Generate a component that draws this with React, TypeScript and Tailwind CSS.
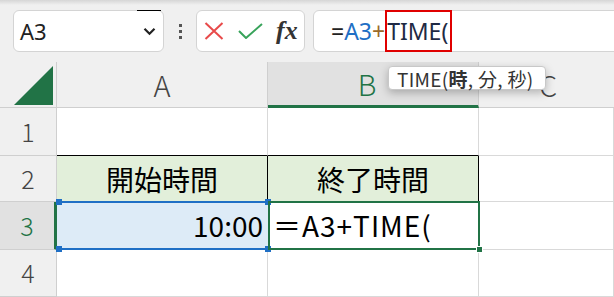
import React from "react";

const GRID = "border-r border-b border-[#d9d9d9]";

function Handle({ className }: { className: string }) {
  return <span className={"absolute h-[6px] w-[6px] bg-[#1f6fc5] " + className} />;
}

export default function App() {
  return (
    <div className="relative h-[297px] w-[614px] overflow-hidden bg-white font-['Noto_Sans','Liberation_Sans',sans-serif]">
      {/* Toolbar */}
      <div className="relative flex h-[62px] items-start bg-[#f0f0f0] pl-[13px] pt-[10px]">
        <div className="absolute inset-x-0 top-0 h-[5px] bg-gradient-to-b from-[#d6d6d6] to-[#f0f0f0]" />

        {/* Name box */}
        <div className="relative flex h-[42px] w-[151px] items-center rounded-[6px] border border-[#d4d4d4] bg-white pl-[6px] pr-[6px]">
          <span className="absolute left-[123px] top-[-1px] h-[1px] w-[24px] bg-black" />
          <span className="flex-1 text-[22px] leading-none text-[#222]">A3</span>
          <svg width="13" height="9" viewBox="0 0 13 9" className="mr-[1px]">
            <path d="M1.5 1.8 L6.5 6.8 L11.5 1.8" fill="none" stroke="#222" strokeWidth="2.2" />
          </svg>
        </div>

        {/* Dots */}
        <div className="flex h-[42px] w-[32px] flex-col items-center justify-center gap-[3px]">
          <span className="h-[3px] w-[3px] bg-[#555]" />
          <span className="h-[3px] w-[3px] bg-[#555]" />
          <span className="h-[3px] w-[3px] bg-[#555]" />
        </div>

        {/* Cancel / Enter / fx */}
        <div className="flex h-[42px] w-[109px] items-center rounded-[6px] border border-[#d4d4d4] bg-white pl-[7px]">
          <svg width="20" height="18" viewBox="0 0 20 18">
            <path d="M1.5 1 L18.5 17 M18.5 1 L1.5 17" stroke="#e84a4a" strokeWidth="2" fill="none" />
          </svg>
          <svg width="25" height="16" viewBox="0 0 25 16" className="ml-[14px]">
            <path d="M1 8 L8 15 L24 1" stroke="#38a35a" strokeWidth="2" fill="none" />
          </svg>
          <span className="ml-[13px] font-['Liberation_Serif',serif] text-[26px] font-bold italic leading-none text-[#333]">
            fx
          </span>
        </div>

        {/* Formula bar */}
        <div className="-mr-[20px] ml-[8px] flex h-[42px] flex-1 items-stretch rounded-[6px] border border-[#d4d4d4] bg-white pl-[17px] text-[23px] leading-none">
          <span className="flex items-center text-[#222]">=</span>
          <span className="flex items-center text-[#1f6fc5]">A3</span>
          <span className="flex items-center text-[#9a6a2a]">+</span>
          <span className="-my-[1px] flex items-center border-2 border-[#e00000] pr-[2px] text-[#1f2a44]">TIME(</span>
        </div>
      </div>

      {/* Sheet */}
      <div className="grid grid-cols-[57px_211px_211px_1fr] grid-rows-[46px_48px_46px_48px_47px] font-['Noto_Sans_CJK_JP','Noto_Sans',sans-serif]">
        {/* Header row */}
        <div className="relative border-r border-b border-[#cfcfcf] bg-[#f0f0f0]">
          <svg width="40" height="40" viewBox="0 0 40 40" className="absolute left-[14px] top-[4px]">
            <polygon points="39,0 39,39 0,39" fill="#217346" />
          </svg>
        </div>
        <div className="flex items-center justify-center border-r border-b border-[#cfcfcf] bg-[#f0f0f0] text-[29px] font-light text-[#444]">
          A
        </div>
        <div className="flex items-center justify-center border-r border-[#cfcfcf] border-b-[3px] border-b-[#217346] bg-[#e1e1e1] text-[29px] font-light text-[#217346]">
          <span className="-ml-[12px]">B</span>
        </div>
        <div className="flex items-center border-b border-[#cfcfcf] bg-[#f0f0f0] pl-[60px] text-[29px] font-light text-[#444]">
          C
        </div>

        {/* Row 1 */}
        <div className="flex items-center justify-center border-r border-b border-[#cfcfcf] bg-[#f0f0f0] text-[25px] font-light text-[#444]">1</div>
        <div className="border-r border-b border-r-[#d9d9d9] border-b-black" />
        <div className="border-r border-b border-r-[#d9d9d9] border-b-black" />
        <div className={GRID} />

        {/* Row 2 */}
        <div className="flex items-center justify-center border-r border-b border-[#cfcfcf] bg-[#f0f0f0] text-[25px] font-light text-[#444]">2</div>
        <div className="flex items-center justify-center border-r border-r-black bg-[#e2efda] text-[28px] text-black">開始時間</div>
        <div className="flex items-center justify-center border-r border-r-black bg-[#e2efda] text-[28px] text-black">終了時間</div>
        <div className={GRID} />

        {/* Row 3 */}
        <div className="flex items-center justify-center border-r-[3px] border-r-[#217346] border-b border-b-[#cfcfcf] bg-[#e1e1e1] text-[25px] font-light text-[#217346]">3</div>
        <div className="relative flex items-center justify-end bg-[#ddebf7] pr-[5px] text-[28px] text-black">
          <div className="absolute inset-x-0 -top-[1px] bottom-0 border-y-2 border-[#1f6fc5]" />
          <Handle className="-left-[1px] -top-[3px]" />
          <Handle className="-right-[3px] -top-[3px]" />
          <Handle className="-left-[1px] -bottom-[2px]" />
          <Handle className="-right-[3px] -bottom-[2px]" />
          <span className="relative -mt-[3px]">10:00</span>
        </div>
        <div className="relative flex items-center pl-[5px] text-[28px] tracking-[1px] text-black">
          <div className="absolute -top-[1px] -right-[1px] bottom-0 left-0 border-[2px] border-[#217346]" />
          <span className="absolute -bottom-[3px] -right-[4px] h-[7px] w-[7px] border border-white bg-[#217346]" />
          <span className="relative -mt-[3px]">＝A3+TIME(</span>
        </div>
        <div className={GRID} />

        {/* Row 4 */}
        <div className="flex items-center justify-center border-r border-b border-[#cfcfcf] bg-[#f0f0f0] text-[25px] font-light text-[#444]">4</div>
        <div className={GRID} />
        <div className={GRID} />
        <div className={GRID} />
      </div>

      {/* Function tooltip */}
      <div className="absolute left-[388px] top-[66px] flex h-[24px] w-[158px] items-center rounded-[4px] border border-[#c8c8c8] bg-white pl-[8px] text-[19px] leading-none tracking-[0.3px] text-[#333] shadow-[0_3px_8px_rgba(0,0,0,0.25)] font-['Noto_Sans_CJK_JP','Noto_Sans',sans-serif]">
        TIME(<b className="font-bold">時</b>, 分, 秒)
      </div>
    </div>
  );
}
